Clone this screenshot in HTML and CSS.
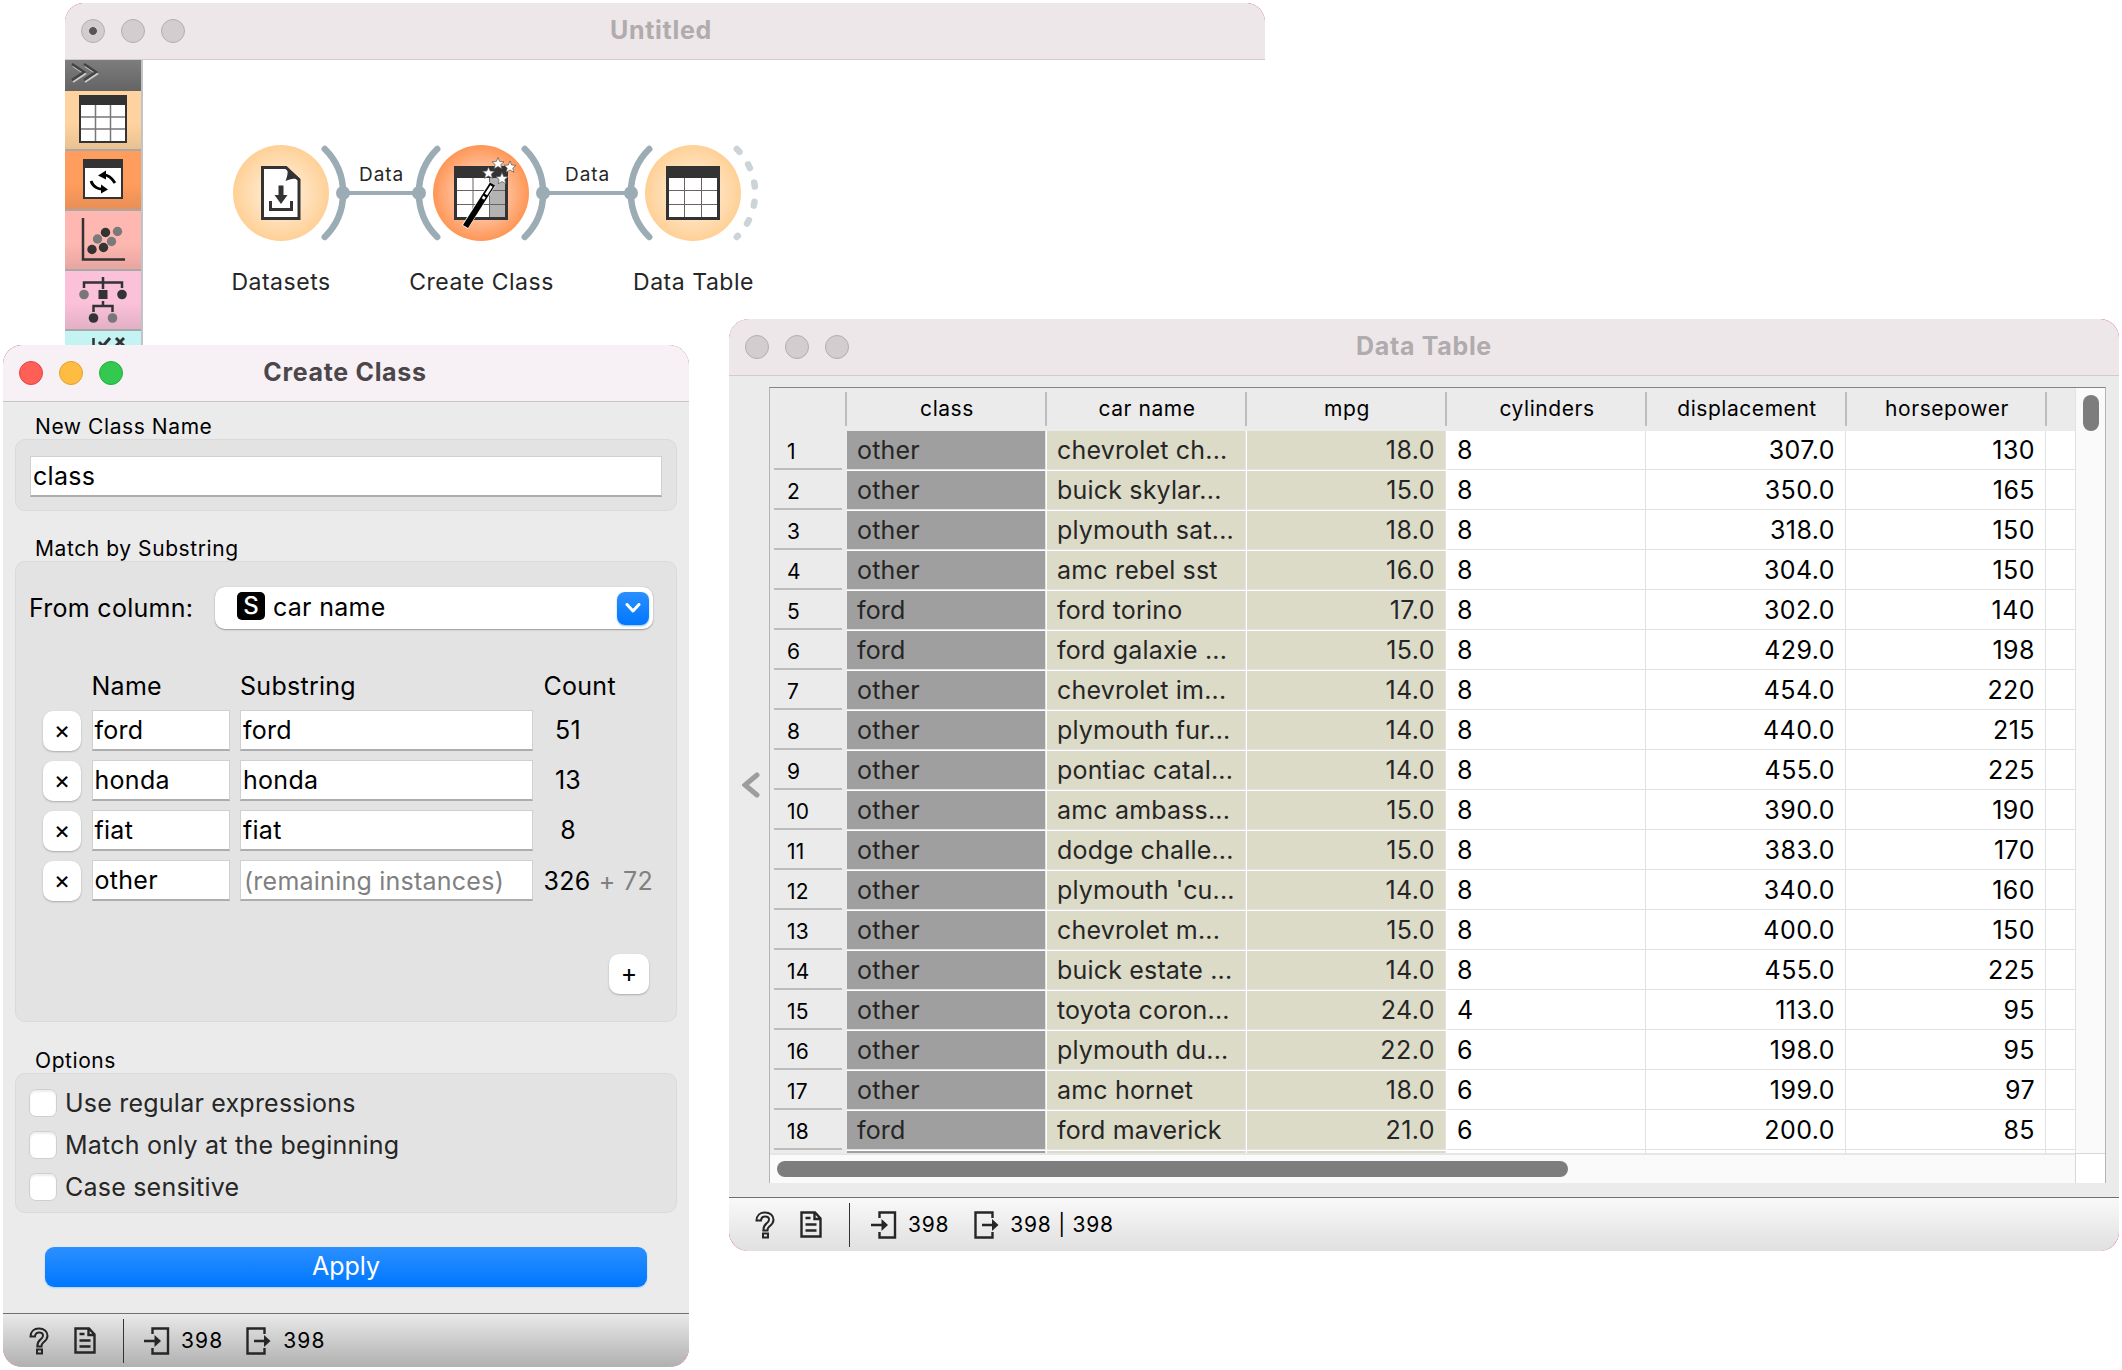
FILE: index.html
```
<!DOCTYPE html>
<html lang="en">
<head>
<meta charset="utf-8">
<title>Create Class</title>
<link rel="stylesheet" href="styles.css">
</head>
<body>
<svg class="symbols" width="0" height="0">
  <defs>
    <symbol id="i-help" viewBox="0 0 20 28"><path d="M1.5 9.5C1.5 4.500 5 1.500 10 1.500c5 0 8.500 3 8.500 7.200 0 3.500-2 5-4 6.600-1.600 1.300-2 2-2 4.200H8.300c0-3.800.9-5.200 3-6.900 1.800-1.400 2.700-2.200 2.700-3.900 0-1.900-1.500-3.200-3.800-3.200-2.500 0-4 1.500-4.200 4z M8 22.500h5v4H8z"/></symbol>
    <symbol id="i-report" viewBox="0 0 22 27"><path d="M1.500 1.500h13.500l5.500 6v18h-19z M14.500 1.500v6.500h6 M5.500 7h5 M5.500 13.500h11 M5.500 19.500h11"/></symbol>
    <symbol id="i-in" viewBox="0 0 26 28"><path d="M8.500 7V1.500H24v25H8.500V21 M0 14h12"/><path d="M10.500 8v12l6.500-6z" fill="#262626" stroke="none"/></symbol>
    <symbol id="i-out" viewBox="0 0 26 28"><path d="M18.500 7V1.500H1.500v25h17V21 M8 14h12"/><path d="M18 8v12l6.500-6z" fill="#262626" stroke="none"/></symbol>
  </defs>
</svg>

<section class="window main">
  <div class="shell">
    <header class="titlebar inactive">
      <span class="lights"><i class="dot"></i><i></i><i></i></span>
      <h1>Untitled</h1><span></span>
    </header>
    <div class="workspace">
      <nav class="toolbox">
        <div class="expander"><svg width="30" height="22"><path d="M1 1l12 8-12 8M13 1l12 8-12 8" transform="translate(1 2)" fill="none" stroke="#ccc" stroke-width="2"/><path d="M1 1l12 8-12 8M13 1l12 8-12 8" fill="none" stroke="#444" stroke-width="2.500"/></svg></div>
        <div class="tool data"><svg width="48" height="48"><rect x="1" y="1" width="46" height="46" fill="#fff" stroke="#333" stroke-width="2"/><path d="M0 0h48v10H0z" fill="#333"/><path d="M16.500 10v36M31.500 10v36M2 22h44M2 34h44" stroke="#777" stroke-width="1.500"/></svg></div>
        <div class="tool transform"><svg width="40" height="40"><rect x="1" y="1" width="38" height="38" fill="#fff" stroke="#333" stroke-width="2"/><path d="M0 0h40v9H0z" fill="#333"/><path d="M32 24c-3-5-8-9-13-8M8 22c2 6 8 9 13 8" fill="none" stroke="#000" stroke-width="2.800"/><path d="M15 16.500l8-5v9zM25 30.500l-7-5v9z"/></svg></div>
        <div class="tool visualize"><svg width="44" height="44"><path d="M2 0v41.500h42" fill="none" stroke="#333" stroke-width="2.500"/><g fill="#333"><circle cx="11" cy="31.500" r="4.700"/><circle cx="22.500" cy="29.500" r="4.700"/><circle cx="24.500" cy="14.500" r="4.700"/></g><g fill="#7a7a7a"><circle cx="16.500" cy="21" r="4.700"/><circle cx="30.500" cy="23.500" r="4.700"/><circle cx="36.500" cy="13.500" r="4.700"/></g></svg></div>
        <div class="tool model"><svg width="48" height="47"><path d="M5 12V6.500h38V12M24 1v12M14.500 36v-6h19v6M24 25v5" fill="none" stroke="#333" stroke-width="2.500"/><path d="M19.500 14h9v9h-9z" fill="#333"/><circle cx="43" cy="18.500" r="4.800" fill="#333"/><circle cx="5" cy="18.500" r="4.800" fill="#777"/><circle cx="14.500" cy="42" r="4.800" fill="#333"/><circle cx="33.500" cy="42" r="4.800" fill="#777"/></svg></div>
        <div class="tool evaluate"><svg width="48" height="40"><path d="M14.500 2v38" stroke="#333" stroke-width="2.500"/><path d="M20 6l4 4 7-8M37 2l8 8M45 2l-8 8" fill="none" stroke="#333" stroke-width="3"/></svg></div>
      </nav>
      <svg class="canvas" width="700" height="290" viewBox="143 60 700 290">
        <defs>
          <radialGradient id="g-data"><stop offset="0" stop-color="#fff1e0"/><stop offset=".35" stop-color="#ffe8cb"/><stop offset="1" stop-color="#ffd096"/></radialGradient>
          <radialGradient id="g-transform"><stop offset="0" stop-color="#ffe0cf"/><stop offset=".45" stop-color="#ffc5a3"/><stop offset="1" stop-color="#ff9656"/></radialGradient>
          <path id="star" d="M0-6l1.700 4 4.300.300-3.200 2.800 1.100 4.200L0 3l-3.900 2.300 1.100-4.200L-6-1.700l4.300-.3z"/>
        </defs>
        <g class="links"><path d="M343 193h76M543 193h88"/></g>
        <g class="arcs">
          <path d="M324.800 149a62 62 0 0 1 0 88M437.200 149a62 62 0 0 0 0 88M524.800 149a62 62 0 0 1 0 88M649.200 149a62 62 0 0 0 0 88"/>
          <path class="idle" d="M736.800 149a62 62 0 0 1 0 88"/>
        </g>
        <g fill="#9cacb5"><circle cx="343" cy="193" r="7"/><circle cx="419" cy="193" r="7"/><circle cx="543" cy="193" r="7"/><circle cx="631" cy="193" r="7"/></g>
        <circle cx="281" cy="193" r="48" fill="url(#g-data)"/>
        <circle cx="481" cy="193" r="48" fill="url(#g-transform)"/>
        <circle cx="693" cy="193" r="48" fill="url(#g-data)"/>
        <path d="M262.500 167.500h23.500l13 12.500v38.500h-36.500z" fill="#fff" stroke="#333" stroke-width="3"/>
        <path d="M286 166.500l14.500 12.500c-5-.5-10-.5-15 2 2.500-6 3-11 .5-14.500z" fill="#333"/>
        <path d="M281 185.500v12" stroke="#333" stroke-width="5"/><path d="M274.500 195h13l-6.500 9z" fill="#333"/>
        <path d="M270.500 201v8.500h21V201" fill="none" stroke="#333" stroke-width="3"/>
        <rect x="455.500" y="167.500" width="51" height="51" fill="#fff" stroke="#333" stroke-width="3"/>
        <path d="M490 178h15v39h-15z" fill="#b3b3b3"/><path d="M454 166h54v12h-54z" fill="#333"/>
        <path d="M473 178v39M489.500 178v39M457 190.500h48M457 204.500h48" stroke="#6b6360" fill="none"/>
        <path d="M465 227l27.500-43" stroke="#fff" stroke-width="7"/>
        <path d="M465.500 226.500l27-42.500" stroke="#000" stroke-width="6"/>
        <path d="M483 199l1.500-2.500M486 194.500l5.500-8.500" stroke="#fff" stroke-width="2.800"/>
        <g fill="#fff" stroke="#555" stroke-width=".7"><use href="#star" x="498" y="163.500"/><use href="#star" x="510" y="167"/><use href="#star" x="488.500" y="173"/><use href="#star" x="502" y="178.500"/></g>
        <rect x="667.500" y="167.500" width="51" height="51" fill="#fff" stroke="#333" stroke-width="3"/>
        <path d="M666 166h54v12h-54z" fill="#333"/>
        <path d="M684.500 178v39M701.500 178v39M669 190.500h48M669 204.500h48" stroke="#6b6360" fill="none"/>
        <g class="linklabel"><text x="381.500" y="180.500">Data</text><text x="587.500" y="180.500">Data</text></g>
        <g class="nodelabel"><text x="281" y="290">Datasets</text><text x="481.500" y="290">Create Class</text><text x="693.500" y="290">Data Table</text></g>
      </svg>
    </div>
  </div>
</section>

<section class="window create">
  <div class="shell">
    <header class="titlebar">
      <span class="lights"><i class="red"></i><i class="yellow"></i><i class="green"></i></span>
      <h1>Create Class</h1><span></span>
    </header>
    <form class="form">
      <h2>New Class Name</h2>
      <div class="box name-box"><div class="field">class</div></div>
      <h2 class="match">Match by Substring</h2>
      <div class="box match-box">
        <div class="from"><span>From column:</span>
          <div class="combo"><b>S</b><span>car name</span><i><svg width="16" height="10"><path d="M2 1.500l6 6.500 6-6.500" fill="none" stroke="#fff" stroke-width="3" stroke-linecap="round" stroke-linejoin="round"/></svg></i></div>
        </div>
        <div class="rules">
          <span></span><span>Name</span><span>Substring</span><span>Count</span>
          <span class="btn">×</span><div class="field">ford</div><div class="field">ford</div><span class="count">51</span>
          <span class="btn">×</span><div class="field">honda</div><div class="field">honda</div><span class="count">13</span>
          <span class="btn">×</span><div class="field">fiat</div><div class="field">fiat</div><span class="count">8</span>
          <span class="btn">×</span><div class="field">other</div><div class="field hint">(remaining instances)</div><span>326 <em>+ 72</em></span>
        </div>
        <span class="btn add">+</span>
      </div>
      <h2 class="options">Options</h2>
      <div class="box option-box">
        <div class="check"><i></i>Use regular expressions</div>
        <div class="check"><i></i>Match only at the beginning</div>
        <div class="check"><i></i>Case sensitive</div>
      </div>
      <div class="apply">Apply</div>
    </form>
    <footer class="status">
      <svg class="ic help" width="20" height="28"><use href="#i-help"/></svg>
      <svg class="ic report" width="22" height="27"><use href="#i-report"/></svg>
      <span class="rule"></span>
      <svg class="ic in" width="26" height="28"><use href="#i-in"/></svg><span>398</span>
      <svg class="ic out" width="26" height="28"><use href="#i-out"/></svg><span>398</span>
    </footer>
  </div>
</section>

<section class="window table">
  <div class="shell">
    <header class="titlebar inactive">
      <span class="lights"><i></i><i></i><i></i></span>
      <h1>Data Table</h1><span></span>
    </header>
    <div class="body">
      <div class="side"><svg width="18" height="26"><path d="M15 3L3 13l12 10" fill="none" stroke="#9d9d9d" stroke-width="5" stroke-linecap="round"/></svg></div>
      <div class="frame">
        <div class="view">
          <table>
            <thead><tr><th></th><th>class</th><th>car name</th><th>mpg</th><th>cylinders</th><th>displacement</th><th>horsepower</th><th></th></tr></thead>
            <tbody>
              <tr><th>1</th><td>other</td><td>chevrolet ch...</td><td>18.0</td><td>8</td><td>307.0</td><td>130</td><td></td></tr>
              <tr><th>2</th><td>other</td><td>buick skylar...</td><td>15.0</td><td>8</td><td>350.0</td><td>165</td><td></td></tr>
              <tr><th>3</th><td>other</td><td>plymouth sat...</td><td>18.0</td><td>8</td><td>318.0</td><td>150</td><td></td></tr>
              <tr><th>4</th><td>other</td><td>amc rebel sst</td><td>16.0</td><td>8</td><td>304.0</td><td>150</td><td></td></tr>
              <tr><th>5</th><td>ford</td><td>ford torino</td><td>17.0</td><td>8</td><td>302.0</td><td>140</td><td></td></tr>
              <tr><th>6</th><td>ford</td><td>ford galaxie ...</td><td>15.0</td><td>8</td><td>429.0</td><td>198</td><td></td></tr>
              <tr><th>7</th><td>other</td><td>chevrolet im...</td><td>14.0</td><td>8</td><td>454.0</td><td>220</td><td></td></tr>
              <tr><th>8</th><td>other</td><td>plymouth fur...</td><td>14.0</td><td>8</td><td>440.0</td><td>215</td><td></td></tr>
              <tr><th>9</th><td>other</td><td>pontiac catal...</td><td>14.0</td><td>8</td><td>455.0</td><td>225</td><td></td></tr>
              <tr><th>10</th><td>other</td><td>amc ambass...</td><td>15.0</td><td>8</td><td>390.0</td><td>190</td><td></td></tr>
              <tr><th>11</th><td>other</td><td>dodge challe...</td><td>15.0</td><td>8</td><td>383.0</td><td>170</td><td></td></tr>
              <tr><th>12</th><td>other</td><td>plymouth 'cu...</td><td>14.0</td><td>8</td><td>340.0</td><td>160</td><td></td></tr>
              <tr><th>13</th><td>other</td><td>chevrolet m...</td><td>15.0</td><td>8</td><td>400.0</td><td>150</td><td></td></tr>
              <tr><th>14</th><td>other</td><td>buick estate ...</td><td>14.0</td><td>8</td><td>455.0</td><td>225</td><td></td></tr>
              <tr><th>15</th><td>other</td><td>toyota coron...</td><td>24.0</td><td>4</td><td>113.0</td><td>95</td><td></td></tr>
              <tr><th>16</th><td>other</td><td>plymouth du...</td><td>22.0</td><td>6</td><td>198.0</td><td>95</td><td></td></tr>
              <tr><th>17</th><td>other</td><td>amc hornet</td><td>18.0</td><td>6</td><td>199.0</td><td>97</td><td></td></tr>
              <tr><th>18</th><td>ford</td><td>ford maverick</td><td>21.0</td><td>6</td><td>200.0</td><td>85</td><td></td></tr>
              <tr><th></th><td></td><td></td><td></td><td></td><td></td><td></td><td></td></tr>
            </tbody>
          </table>
        </div>
        <div class="vscroll"><i></i></div>
        <div class="hscroll"><i></i></div>
        <div class="corner"></div>
      </div>
    </div>
    <footer class="status light">
      <svg class="ic help" width="20" height="28"><use href="#i-help"/></svg>
      <svg class="ic report" width="22" height="27"><use href="#i-report"/></svg>
      <span class="rule"></span>
      <svg class="ic in" width="26" height="28"><use href="#i-in"/></svg><span>398</span>
      <svg class="ic out" width="26" height="28"><use href="#i-out"/></svg><span>398 | 398</span>
    </footer>
  </div>
</section>
</body>
</html>
```
FILE: styles.css
```
* { box-sizing: border-box; }
body {
  margin: 0; width: 2122px; height: 1370px; position: relative; overflow: hidden;
  background: #fff; color: #000;
  font: 400 25px/30px Inter, "Liberation Sans", sans-serif; letter-spacing: .28px;
}
i, em { font-style: normal; }
h1, h2 { margin: 0; }
svg { display: block; flex: none; }
.symbols { position: absolute; }

/* windows */
.window { position: absolute; overflow: hidden; background: #d0437f; }
.shell { height: 100%; display: flex; flex-direction: column; overflow: hidden; background: #ebebeb; border-radius: 20px; }
.main { left: 65px; top: 3px; width: 1200px; height: 345px; border-radius: 19px 19px 0 0; }
.main .shell { border-radius: 20px 20px 0 0; background: #fff; }
.create { left: 3px; top: 345px; width: 686px; height: 1022px; border-radius: 19px 20px 19px 19px; }
.table { left: 729px; top: 319px; width: 1390px; height: 932px; border-radius: 20px 19px 19px 19px; }

.titlebar {
  flex: none; height: 57px; display: grid; grid-template-columns: 1fr auto 1fr; align-items: center;
  padding-left: 16px; padding-right: 16px;
  background: #f7f0f5; border-bottom: 1px solid #c9c4c7;
}
.titlebar.inactive { background: #ede7e9; border-color: #d0cccd; }
.titlebar h1 { font-size: 25px; font-weight: 700; line-height: 30px; letter-spacing: .68px; padding-bottom: 3px; color: #4a4649; }
.titlebar.inactive h1 { color: #b0abad; }
.main .titlebar { padding-right: 24px; }
.create .titlebar { padding-right: 18px; }
.lights { display: flex; gap: 16px; }
.lights i { width: 24px; height: 24px; border-radius: 50%; background: #d3cdcf; border: 1px solid #b3adb0; }
.lights .red { background: #ff5f57; border-color: #e0443e; }
.lights .yellow { background: #febc40; border-color: #dfa02f; }
.lights .green { background: #33c84f; border-color: #22ad38; }
.lights .dot { background: radial-gradient(circle, #5a5457 3.5px, #d3cdcf 4.3px); }

/* workflow window */
.workspace { display: flex; flex: 1; min-height: 0; }
.toolbox { width: 78px; flex: none; border-right: 2px solid #c0c4c6; overflow: hidden; }
.expander { height: 31px; padding: 3px 0 0 6px; background: linear-gradient(#7d7d7d, #646464); }
.tool { height: 60px; border-bottom: 2px solid #a8a8a8; display: grid; place-items: center; }
.tool.data { background: linear-gradient(#ffd39f 55%, #e9c191); padding-bottom: 2px; }
.tool.transform { background: linear-gradient(#ff9d5e 55%, #e98f56); padding-bottom: 2px; }
.tool.visualize { background: linear-gradient(#ffb7b1 55%, #e8a6a1); }
.tool.model { background: linear-gradient(#fac1d9 55%, #e3b0c6); padding-bottom: 2px; }
.tool.evaluate { background: #c3f3f2; place-items: start center; padding-top: 5px; }
.links { fill: none; stroke: #9cacb5; stroke-width: 4; }
.arcs { fill: none; stroke: #9cacb5; stroke-width: 6.5; stroke-linecap: round; }
.arcs .idle { stroke: #ccd4d8; stroke-dasharray: 4 15.2; stroke-dashoffset: 0; }
.linklabel, .nodelabel { text-anchor: middle; fill: #262626; }
.linklabel { font-size: 19px; letter-spacing: .87px; }
.nodelabel { font-size: 23px; letter-spacing: .52px; }

/* create class */
.form { flex: 1; display: flex; flex-direction: column; padding: 11px 12px 0 12px; }
h2 { font-size: 21px; font-weight: 400; height: 26px; line-height: 28px; letter-spacing: .58px; padding-left: 20px; }
h2.match { margin-top: 24px; }
h2.options { margin-top: 25px; }
.box { background: #e3e3e3; border: 1px solid #dadada; border-radius: 10px; }
.name-box { height: 72px; padding: 16px 14px; }
.field {
  height: 41px; padding-left: 2px; line-height: 39px; background: #fff; white-space: nowrap;
  border: 1px solid #d0d0d0; border-bottom: 2px solid #adadad;
}
.match-box { height: 461px; display: flex; flex-direction: column; }
.from { display: flex; align-items: center; padding: 25px 23px 0 13px; height: 67px; justify-content: space-between; }
.combo {
  width: 438px; height: 42px; display: flex; align-items: center; padding: 0 4px 0 22px; background: #fff;
  border-radius: 10px; box-shadow: 0 0 1px #aaa, 0 1px 1.500px #999;
}
.combo b { width: 28px; height: 28px; margin: -5px 8px 0 0; border-radius: 5px; background: #000; color: #fff; font: 500 24px/28px Inter, sans-serif; text-align: center; letter-spacing: 0; }
.combo span { flex: 1; margin-top: -2px; }
.combo i { width: 32px; height: 33px; border-radius: 8px; background: linear-gradient(#2b8fff, #0077ff); display: grid; place-items: center; box-shadow: 0 1px 2px #8abcf5; }
.rules { display: grid; grid-template-columns: 38px 138px 293px 120px; grid-template-rows: 30px; grid-auto-rows: 41px; gap: 9px 10.500px; margin: 42px 0 0 27px; align-items: center; white-space: nowrap; }
.rules .count { width: 49px; text-align: center; margin-top: -1px; }
.rules em { color: #808080; margin-left: 1px; }
.field.hint { color: #808080; padding-left: 3px; line-height: 40px; letter-spacing: .24px; }
.btn { width: 38px; height: 40px; border-radius: 10px; background: #fff; box-shadow: 0 1px 2px #aaa; text-align: center; line-height: 39px; letter-spacing: 0; }
.add { width: 40px; margin: 53px 0 0 593px; }
.option-box { height: 140px; padding: 14px 13px; display: grid; gap: 12px; align-content: start; color: #262626; }
.check { display: flex; align-items: center; gap: 8px; height: 30px; letter-spacing: .22px; }
.check i { width: 28px; height: 28px; border-radius: 7px; background: #fff; border: 1px solid #cfcfcf; box-shadow: inset 0 2px 2px #eee; }
.apply { width: 602px; height: 40px; margin: 34px 0 0 30px; border-radius: 9px; background: linear-gradient(#2b90ff, #0077ff); color: #fff; text-align: center; line-height: 38px; letter-spacing: 0; box-shadow: 0 1px 2px #a9cdf5; }

.status { flex: none; height: 54px; display: flex; align-items: center; border-top: 1px solid #707070; background: linear-gradient(#e9e9e9, #b0b0b0); font-size: 21px; letter-spacing: 1.1px; padding-left: 26px; }
.status.light { background: linear-gradient(#f9f9f9, #e0e0e0); letter-spacing: .75px; }
.ic { fill: none; stroke: #262626; stroke-width: 2.4; }
.help { fill: none; stroke-width: 2; }
.report { margin-left: 25px; }
.rule { width: 1px; height: 44px; margin: 0 20px 0 27px; background: #333; }
.in, .out { margin-right: 11px; }
.out { margin-left: 23px; }
.light .rule { margin-right: 21px; }
.light .out { margin-left: 25px; margin-right: 10px; }

/* data table */
.body { flex: 1; min-height: 0; display: flex; padding: 11px 13px 14px 0; }
.side { width: 40px; display: flex; align-items: center; padding-left: 12.500px; }
.frame { flex: 1; display: grid; grid-template: 1fr 30px / 1fr 30px; border: 1px solid #b4b4b4; border-top: 1px solid #858585; }
.view { overflow: hidden; min-height: 0; height: 765px; }
table { width: 1305px; border-collapse: separate; border-spacing: 0; table-layout: fixed; }
thead th { height: 43px; padding: 0 0 1px; font-size: 21px; font-weight: 400; line-height: 28px; letter-spacing: .55px; background: linear-gradient(#bdbdbd, #bdbdbd) 100% 4px / 2px 34px no-repeat; }
thead th:first-child { width: 77px; }
thead th { width: 200px; }
thead th:last-child { width: 28px; background: none; }
tbody th { height: 40px; padding: 1px 0 0 17px; text-align: left; font-size: 21px; font-weight: 400; line-height: 38px; letter-spacing: .3px; background: linear-gradient(#bdbdbd, #bdbdbd) 4px 37px / 68px 2px no-repeat; }
td {
  height: 40px; padding: 0 12px 2px 10px; line-height: 38px; white-space: nowrap; letter-spacing: .18px;
  background: linear-gradient(#e2e2e2, #e2e2e2) 0 38px / 100% 1px no-repeat, linear-gradient(#e2e2e2, #e2e2e2) 198px 0 / 1px 100% no-repeat, #fff;
}
td:nth-child(-n+4) { color: #262626; }
td:nth-child(2) { background: linear-gradient(#9f9f9f, #9f9f9f) 0 0 / 198px 38px no-repeat, linear-gradient(#e4e0e6, #e4e0e6) 0 0 / 199px 39px no-repeat, #fff; }
td:nth-child(3), td:nth-child(4) { background: linear-gradient(#dcdbc7, #dcdbc7) 0 0 / 198px 38px no-repeat, linear-gradient(#e4e0e6, #e4e0e6) 0 0 / 199px 39px no-repeat, #fff; }
td:nth-child(4), td:nth-child(6), td:nth-child(7) { text-align: right; letter-spacing: .45px; }
.vscroll { background: #fafafa; border-left: 1px solid #e2e2e2; padding: 7px 0 0 7px; }
.vscroll i { display: block; width: 16px; height: 36px; border-radius: 8px; background: #7d7d7d; }
.hscroll { background: #fafafa; border-top: 2px solid #e6e6e6; padding: 6px 0 0 7px; }
.hscroll i { display: block; width: 791px; height: 16px; border-radius: 8px; background: #7d7d7d; }
.corner { background: #fff; border: 1px solid #d8d8d8; border-width: 1px 0 0 1px; }
```
